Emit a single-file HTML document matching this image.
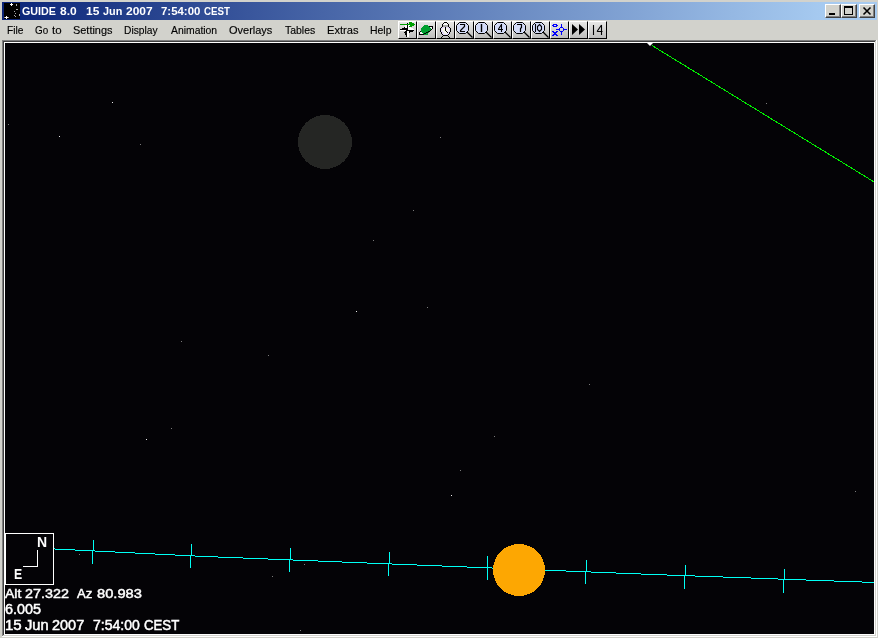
<!DOCTYPE html>
<html><head><meta charset="utf-8"><style>
html,body{margin:0;padding:0;}
body{width:878px;height:638px;overflow:hidden;position:relative;background:#D2D2CC;font-family:"Liberation Sans",sans-serif;}
.t{position:absolute;white-space:pre;line-height:1;filter:grayscale(1);}
svg{position:absolute;left:0;top:0;}
</style></head><body>

<div style="position:absolute;left:2px;top:2px;width:875px;height:18px;background:linear-gradient(to right,#0A2478 0px,#A6CAF0 820px);"></div>
<svg style="left:4px;top:3px" width="16" height="16" viewBox="0 0 16 16" shape-rendering="crispEdges"><rect width="16" height="16" fill="#000"/><rect x="7" y="0" width="1" height="1" fill="#fff"/><rect x="6" y="1" width="1" height="1" fill="#fff"/><rect x="7" y="1" width="1" height="1" fill="#fff"/><rect x="8" y="1" width="1" height="1" fill="#fff"/><rect x="7" y="2" width="1" height="1" fill="#fff"/><rect x="2" y="13" width="1" height="1" fill="#fff"/><rect x="1" y="14" width="1" height="1" fill="#fff"/><rect x="2" y="14" width="1" height="1" fill="#fff"/><rect x="3" y="14" width="1" height="1" fill="#fff"/><rect x="2" y="15" width="1" height="1" fill="#fff"/><rect x="0" y="14" width="1" height="1" fill="#888"/><rect x="4" y="14" width="1" height="1" fill="#888"/><rect x="12" y="1" width="1" height="1" fill="#aaa"/><rect x="12" y="2" width="1" height="1" fill="#aaa"/><rect x="12" y="6" width="1" height="1" fill="#aaa"/><rect x="13" y="6" width="1" height="1" fill="#aaa"/><rect x="10" y="8" width="1" height="1" fill="#aaa"/><rect x="11" y="10" width="1" height="1" fill="#aaa"/><rect x="15" y="11" width="1" height="1" fill="#aaa"/><rect x="15" y="12" width="1" height="1" fill="#aaa"/><rect x="10" y="12" width="1" height="1" fill="#aaa"/><rect x="11" y="13" width="1" height="1" fill="#aaa"/></svg>
<div class="t" style="left:22.0px;top:6.11px;font-size:12px;font-weight:bold;color:#fff;transform:scale(0.895,0.889);transform-origin:0 0;">GUIDE</div>
<div class="t" style="left:60.0px;top:6.11px;font-size:12px;font-weight:bold;color:#fff;transform:scale(1.0,0.889);transform-origin:0 0;">8.0</div>
<div class="t" style="left:86.0px;top:6.11px;font-size:12px;font-weight:bold;color:#fff;transform:scale(1.0,0.889);transform-origin:0 0;">15</div>
<div class="t" style="left:103.0px;top:6.11px;font-size:12px;font-weight:bold;color:#fff;transform:scale(0.905,0.889);transform-origin:0 0;">Jun</div>
<div class="t" style="left:126.0px;top:6.11px;font-size:12px;font-weight:bold;color:#fff;transform:scale(1.0,0.889);transform-origin:0 0;">2007</div>
<div class="t" style="left:161.0px;top:6.11px;font-size:12px;font-weight:bold;color:#fff;transform:scale(0.951,0.889);transform-origin:0 0;">7:54:00</div>
<div class="t" style="left:204.0px;top:6.11px;font-size:12px;font-weight:bold;color:#fff;transform:scale(0.812,0.889);transform-origin:0 0;">CEST</div>
<div class="t" style="left:7.12px;top:25.0px;font-size:11.5px;font-weight:normal;color:#000;transform:scale(0.882,1.0);transform-origin:0 0;-webkit-text-stroke:0.15px #000">File</div>
<div class="t" style="left:35.14px;top:25.0px;font-size:11.5px;font-weight:normal;color:#000;transform:scale(0.857,1.0);transform-origin:0 0;-webkit-text-stroke:0.15px #000">Go</div>
<div class="t" style="left:52.0px;top:25.0px;font-size:11.5px;font-weight:normal;color:#000;transform:scale(1.0,1.0);transform-origin:0 0;-webkit-text-stroke:0.15px #000">to</div>
<div class="t" style="left:73.05px;top:25.0px;font-size:11.5px;font-weight:normal;color:#000;transform:scale(0.95,1.0);transform-origin:0 0;-webkit-text-stroke:0.15px #000">Settings</div>
<div class="t" style="left:124.11px;top:25.0px;font-size:11.5px;font-weight:normal;color:#000;transform:scale(0.892,1.0);transform-origin:0 0;-webkit-text-stroke:0.15px #000">Display</div>
<div class="t" style="left:171.0px;top:25.0px;font-size:11.5px;font-weight:normal;color:#000;transform:scale(0.902,1.0);transform-origin:0 0;-webkit-text-stroke:0.15px #000">Animation</div>
<div class="t" style="left:229.05px;top:25.0px;font-size:11.5px;font-weight:normal;color:#000;transform:scale(0.955,1.0);transform-origin:0 0;-webkit-text-stroke:0.15px #000">Overlays</div>
<div class="t" style="left:285.0px;top:25.0px;font-size:11.5px;font-weight:normal;color:#000;transform:scale(0.909,1.0);transform-origin:0 0;-webkit-text-stroke:0.15px #000">Tables</div>
<div class="t" style="left:327.03px;top:25.0px;font-size:11.5px;font-weight:normal;color:#000;transform:scale(0.968,1.0);transform-origin:0 0;-webkit-text-stroke:0.15px #000">Extras</div>
<div class="t" style="left:370.09px;top:25.0px;font-size:11.5px;font-weight:normal;color:#000;transform:scale(0.909,1.0);transform-origin:0 0;-webkit-text-stroke:0.15px #000">Help</div>
<div style="position:absolute;left:825px;top:4px;width:16px;height:14px;background:#D2D2CC;box-sizing:border-box;border-top:1px solid #fff;border-left:1px solid #fff;border-right:1px solid #404040;border-bottom:1px solid #404040;"></div>
<div style="position:absolute;left:826px;top:16px;width:14px;height:1px;background:#808080;"></div>
<div style="position:absolute;left:839px;top:5px;width:1px;height:12px;background:#808080;"></div>
<div style="position:absolute;left:841px;top:4px;width:16px;height:14px;background:#D2D2CC;box-sizing:border-box;border-top:1px solid #fff;border-left:1px solid #fff;border-right:1px solid #404040;border-bottom:1px solid #404040;"></div>
<div style="position:absolute;left:842px;top:16px;width:14px;height:1px;background:#808080;"></div>
<div style="position:absolute;left:855px;top:5px;width:1px;height:12px;background:#808080;"></div>
<div style="position:absolute;left:859px;top:4px;width:16px;height:14px;background:#D2D2CC;box-sizing:border-box;border-top:1px solid #fff;border-left:1px solid #fff;border-right:1px solid #404040;border-bottom:1px solid #404040;"></div>
<div style="position:absolute;left:860px;top:16px;width:14px;height:1px;background:#808080;"></div>
<div style="position:absolute;left:873px;top:5px;width:1px;height:12px;background:#808080;"></div>
<div style="position:absolute;left:829px;top:13px;width:6px;height:2px;background:#000;"></div>
<div style="position:absolute;left:844px;top:6px;width:9px;height:9px;box-sizing:border-box;border:1px solid #000;border-top-width:2px"></div>
<svg style="left:859px;top:4px" width="16" height="14" viewBox="0 0 16 14"><path d="M4.5 3.5 L11.5 10.5 M11.5 3.5 L4.5 10.5" stroke="#000" stroke-width="1.6"/></svg>
<div style="position:absolute;left:398px;top:21px;width:19px;height:18px;background:linear-gradient(#e8e8e6,#bdbdbb);box-sizing:border-box;border-top:1px solid #fff;border-left:1px solid #fff;border-right:1px solid #000;border-bottom:1px solid #000;"></div>
<svg style="left:398px;top:21px" width="19" height="18" viewBox="0 0 19 18"><g shape-rendering="crispEdges"><rect x="7" y="4" width="2" height="1" fill="#fff"/><rect x="7" y="5" width="2" height="1" fill="#fff"/><rect x="7" y="6" width="2" height="1" fill="#fff"/><rect x="10" y="4" width="2" height="1" fill="#fff"/><rect x="10" y="5" width="2" height="1" fill="#fff"/><rect x="10" y="6" width="3" height="1" fill="#fff"/><rect x="10" y="7" width="5" height="1" fill="#fff"/><rect x="10" y="8" width="6" height="1" fill="#fff"/><rect x="2" y="9" width="6" height="1" fill="#fff"/><rect x="9" y="10" width="2" height="1" fill="#fff"/><rect x="9" y="11" width="2" height="1" fill="#fff"/><rect x="9" y="12" width="2" height="1" fill="#fff"/><rect x="9" y="13" width="2" height="1" fill="#fff"/><rect x="9" y="14" width="2" height="1" fill="#fff"/><rect x="9" y="15" width="2" height="1" fill="#fff"/><rect x="9" y="2" width="1" height="1" fill="#000"/><rect x="9" y="3" width="1" height="1" fill="#000"/><rect x="9" y="4" width="1" height="1" fill="#000"/><rect x="9" y="5" width="1" height="1" fill="#000"/><rect x="9" y="6" width="1" height="1" fill="#000"/><rect x="9" y="7" width="1" height="1" fill="#000"/><rect x="6" y="6" width="1" height="1" fill="#000"/><rect x="4" y="7" width="5" height="1" fill="#000"/><rect x="2" y="8" width="8" height="1" fill="#000"/><rect x="8" y="9" width="8" height="1" fill="#000"/><rect x="7" y="10" width="2" height="1" fill="#000"/><rect x="11" y="10" width="4" height="1" fill="#000"/><rect x="11" y="11" width="1" height="1" fill="#000"/><rect x="6" y="11" width="3" height="1" fill="#000"/><rect x="7" y="12" width="2" height="1" fill="#000"/><rect x="7" y="13" width="2" height="1" fill="#000"/><rect x="8" y="14" width="1" height="1" fill="#000"/><rect x="8" y="15" width="1" height="1" fill="#000"/><rect x="2" y="3" width="10" height="1" fill="#00A000"/><rect x="11" y="1" width="3" height="1" fill="#00A000"/><rect x="11" y="2" width="5" height="1" fill="#00A000"/><rect x="11" y="3" width="6" height="1" fill="#00A000"/><rect x="12" y="4" width="4" height="1" fill="#00A000"/><rect x="11" y="5" width="3" height="1" fill="#00A000"/></g></svg>
<div style="position:absolute;left:417px;top:21px;width:19px;height:18px;background:linear-gradient(#e8e8e6,#bdbdbb);box-sizing:border-box;border-top:1px solid #fff;border-left:1px solid #fff;border-right:1px solid #000;border-bottom:1px solid #000;"></div>
<svg style="left:417px;top:21px" width="19" height="18" viewBox="0 0 19 18"><g shape-rendering="crispEdges"><rect x="7" y="4" width="4" height="1" fill="#00A030"/><rect x="6" y="5" width="6" height="1" fill="#00A030"/><rect x="5" y="6" width="8" height="1" fill="#00A030"/><rect x="4" y="7" width="10" height="1" fill="#00A030"/><rect x="4" y="8" width="10" height="1" fill="#00A030"/><rect x="4" y="9" width="10" height="1" fill="#00A030"/><rect x="4" y="10" width="9" height="1" fill="#00A030"/><rect x="5" y="11" width="7" height="1" fill="#00A030"/><rect x="6" y="12" width="5" height="1" fill="#00A030"/><rect x="7" y="13" width="4" height="1" fill="#00A030"/><rect x="3" y="11" width="2" height="1" fill="#f4f4f4"/><rect x="3" y="12" width="3" height="1" fill="#f4f4f4"/><rect x="13" y="6" width="2" height="1" fill="#f4f4f4"/><rect x="14" y="7" width="1" height="1" fill="#f4f4f4"/><rect x="12" y="5" width="4" height="1" fill="#000"/><rect x="15" y="6" width="1" height="1" fill="#000"/><rect x="15" y="7" width="1" height="1" fill="#000"/><rect x="14" y="8" width="1" height="1" fill="#000"/><rect x="13" y="9" width="1" height="1" fill="#000"/><rect x="11" y="10" width="2" height="1" fill="#000"/><rect x="9" y="11" width="2" height="1" fill="#000"/><rect x="7" y="12" width="2" height="1" fill="#000"/><rect x="2" y="13" width="5" height="1" fill="#000"/><rect x="3" y="10" width="1" height="1" fill="#000"/><rect x="2" y="11" width="1" height="1" fill="#000"/><rect x="2" y="12" width="1" height="1" fill="#000"/></g></svg>
<div style="position:absolute;left:436px;top:21px;width:19px;height:18px;background:linear-gradient(#e8e8e6,#bdbdbb);box-sizing:border-box;border-top:1px solid #fff;border-left:1px solid #fff;border-right:1px solid #000;border-bottom:1px solid #000;"></div>
<svg style="left:436px;top:21px" width="19" height="18" viewBox="0 0 19 18"><g shape-rendering="crispEdges"><rect x="8" y="2" width="3" height="1" fill="#f8f8f8"/><rect x="7" y="3" width="5" height="1" fill="#f8f8f8"/><rect x="7" y="4" width="5" height="1" fill="#a8a8a8"/><rect x="7" y="5" width="5" height="1" fill="#a8a8a8"/><rect x="6" y="6" width="7" height="1" fill="#E4DAF8"/><rect x="5" y="7" width="9" height="1" fill="#E4DAF8"/><rect x="5" y="8" width="9" height="1" fill="#E4DAF8"/><rect x="5" y="9" width="9" height="1" fill="#E4DAF8"/><rect x="5" y="10" width="9" height="1" fill="#E4DAF8"/><rect x="6" y="11" width="7" height="1" fill="#E4DAF8"/><rect x="6" y="12" width="7" height="1" fill="#E4DAF8"/><rect x="7" y="13" width="5" height="1" fill="#E4DAF8"/><rect x="7" y="7" width="5" height="1" fill="#F6F6EC"/><rect x="6" y="8" width="7" height="1" fill="#F6F6EC"/><rect x="6" y="9" width="7" height="1" fill="#F6F6EC"/><rect x="7" y="10" width="5" height="1" fill="#F6F6EC"/><rect x="8" y="11" width="4" height="1" fill="#F6F6EC"/><rect x="8" y="12" width="3" height="1" fill="#F6F6EC"/><rect x="8" y="1" width="3" height="1" fill="#000"/><rect x="7" y="2" width="1" height="1" fill="#000"/><rect x="11" y="2" width="1" height="1" fill="#000"/><rect x="6" y="3" width="1" height="1" fill="#000"/><rect x="12" y="3" width="1" height="1" fill="#000"/><rect x="6" y="4" width="1" height="1" fill="#000"/><rect x="12" y="4" width="1" height="1" fill="#000"/><rect x="6" y="5" width="1" height="1" fill="#000"/><rect x="12" y="5" width="1" height="1" fill="#000"/><rect x="5" y="6" width="1" height="1" fill="#000"/><rect x="13" y="6" width="1" height="1" fill="#000"/><rect x="4" y="7" width="1" height="1" fill="#000"/><rect x="14" y="7" width="1" height="1" fill="#000"/><rect x="4" y="8" width="1" height="1" fill="#000"/><rect x="14" y="8" width="1" height="1" fill="#000"/><rect x="4" y="9" width="1" height="1" fill="#000"/><rect x="14" y="9" width="1" height="1" fill="#000"/><rect x="4" y="10" width="1" height="1" fill="#000"/><rect x="14" y="10" width="1" height="1" fill="#000"/><rect x="5" y="11" width="1" height="1" fill="#000"/><rect x="13" y="11" width="1" height="1" fill="#000"/><rect x="5" y="12" width="1" height="1" fill="#000"/><rect x="13" y="12" width="1" height="1" fill="#000"/><rect x="6" y="13" width="1" height="1" fill="#000"/><rect x="12" y="13" width="1" height="1" fill="#000"/><rect x="7" y="14" width="5" height="1" fill="#000"/><rect x="6" y="15" width="1" height="1" fill="#000"/><rect x="12" y="15" width="1" height="1" fill="#000"/><rect x="5" y="16" width="1" height="1" fill="#000"/><rect x="13" y="16" width="1" height="1" fill="#000"/><rect x="9" y="6" width="1" height="1" fill="#000"/><rect x="9" y="7" width="1" height="1" fill="#000"/><rect x="9" y="8" width="1" height="1" fill="#000"/><rect x="9" y="9" width="1" height="1" fill="#000"/><rect x="10" y="10" width="1" height="1" fill="#000"/><rect x="11" y="11" width="1" height="1" fill="#000"/></g></svg>
<div style="position:absolute;left:455px;top:21px;width:19px;height:18px;background:linear-gradient(#e8e8e6,#bdbdbb);box-sizing:border-box;border-top:1px solid #fff;border-left:1px solid #fff;border-right:1px solid #000;border-bottom:1px solid #000;"></div>
<svg style="left:455px;top:21px" width="19" height="18" viewBox="0 0 19 18"><path d="M4.5 1.5 H10.5 L13.5 4.5 V9.5 L10.5 12.5 H4.5 L1.5 9.5 V4.5 Z" fill="#D4DCF8" stroke="#000" stroke-width="1"/><path d="M12 11 L17.5 16.5" stroke="#000" stroke-width="1.2"/><path d="M5 3.5 H9.5 V5.5 L5.5 9.5 V10.5 H10" fill="none" stroke="#000" stroke-width="1.2"/></svg>
<div style="position:absolute;left:474px;top:21px;width:19px;height:18px;background:linear-gradient(#e8e8e6,#bdbdbb);box-sizing:border-box;border-top:1px solid #fff;border-left:1px solid #fff;border-right:1px solid #000;border-bottom:1px solid #000;"></div>
<svg style="left:474px;top:21px" width="19" height="18" viewBox="0 0 19 18"><path d="M4.5 1.5 H10.5 L13.5 4.5 V9.5 L10.5 12.5 H4.5 L1.5 9.5 V4.5 Z" fill="#D4DCF8" stroke="#000" stroke-width="1"/><path d="M12 11 L17.5 16.5" stroke="#000" stroke-width="1.2"/><path d="M7.5 3 V11" stroke="#000" stroke-width="1.4"/></svg>
<div style="position:absolute;left:493px;top:21px;width:19px;height:18px;background:linear-gradient(#e8e8e6,#bdbdbb);box-sizing:border-box;border-top:1px solid #fff;border-left:1px solid #fff;border-right:1px solid #000;border-bottom:1px solid #000;"></div>
<svg style="left:493px;top:21px" width="19" height="18" viewBox="0 0 19 18"><path d="M4.5 1.5 H10.5 L13.5 4.5 V9.5 L10.5 12.5 H4.5 L1.5 9.5 V4.5 Z" fill="#D4DCF8" stroke="#000" stroke-width="1"/><path d="M12 11 L17.5 16.5" stroke="#000" stroke-width="1.2"/><path d="M8.5 3 V11 M5 8.5 H10 M8.5 3.5 L5.5 8" fill="none" stroke="#000" stroke-width="1.1"/></svg>
<div style="position:absolute;left:512px;top:21px;width:19px;height:18px;background:linear-gradient(#e8e8e6,#bdbdbb);box-sizing:border-box;border-top:1px solid #fff;border-left:1px solid #fff;border-right:1px solid #000;border-bottom:1px solid #000;"></div>
<svg style="left:512px;top:21px" width="19" height="18" viewBox="0 0 19 18"><path d="M4.5 1.5 H10.5 L13.5 4.5 V9.5 L10.5 12.5 H4.5 L1.5 9.5 V4.5 Z" fill="#D4DCF8" stroke="#000" stroke-width="1"/><path d="M12 11 L17.5 16.5" stroke="#000" stroke-width="1.2"/><path d="M5 3.5 H9.5 V6.5 L8.5 7.5 V11" fill="none" stroke="#000" stroke-width="1.2"/></svg>
<div style="position:absolute;left:531px;top:21px;width:19px;height:18px;background:linear-gradient(#e8e8e6,#bdbdbb);box-sizing:border-box;border-top:1px solid #fff;border-left:1px solid #fff;border-right:1px solid #000;border-bottom:1px solid #000;"></div>
<svg style="left:531px;top:21px" width="19" height="18" viewBox="0 0 19 18"><path d="M4.5 1.5 H10.5 L13.5 4.5 V9.5 L10.5 12.5 H4.5 L1.5 9.5 V4.5 Z" fill="#D4DCF8" stroke="#000" stroke-width="1"/><path d="M12 11 L17.5 16.5" stroke="#000" stroke-width="1.2"/><path d="M4.5 3 V11" stroke="#000" stroke-width="1.1"/><path d="M8.5 3.5 L10.5 5.5 V8.5 L8.5 10.5 L6.5 8.5 V5.5 Z" fill="none" stroke="#000" stroke-width="1.1"/></svg>
<div style="position:absolute;left:550px;top:21px;width:19px;height:18px;background:linear-gradient(#e8e8e6,#bdbdbb);box-sizing:border-box;border-top:1px solid #fff;border-left:1px solid #fff;border-right:1px solid #000;border-bottom:1px solid #000;"></div>
<svg style="left:550px;top:21px" width="19" height="18" viewBox="0 0 19 18"><g shape-rendering="crispEdges"><rect x="3" y="3" width="4" height="1" fill="#0000FF"/><rect x="2" y="4" width="2" height="1" fill="#0000FF"/><rect x="6" y="4" width="2" height="1" fill="#0000FF"/><rect x="3" y="5" width="4" height="1" fill="#0000FF"/><rect x="2" y="10" width="2" height="1" fill="#0000FF"/><rect x="6" y="10" width="2" height="1" fill="#0000FF"/><rect x="3" y="11" width="4" height="1" fill="#0000FF"/><rect x="4" y="12" width="2" height="1" fill="#0000FF"/><rect x="3" y="13" width="4" height="1" fill="#0000FF"/><rect x="2" y="14" width="2" height="1" fill="#0000FF"/><rect x="6" y="14" width="2" height="1" fill="#0000FF"/><rect x="11" y="3" width="1" height="1" fill="#0000FF"/><rect x="11" y="4" width="1" height="1" fill="#0000FF"/><rect x="11" y="5" width="1" height="1" fill="#0000FF"/><rect x="10" y="6" width="3" height="1" fill="#0000FF"/><rect x="9" y="7" width="1" height="1" fill="#0000FF"/><rect x="13" y="7" width="1" height="1" fill="#0000FF"/><rect x="6" y="8" width="4" height="1" fill="#0000FF"/><rect x="13" y="8" width="4" height="1" fill="#0000FF"/><rect x="9" y="9" width="1" height="1" fill="#0000FF"/><rect x="13" y="9" width="1" height="1" fill="#0000FF"/><rect x="10" y="10" width="3" height="1" fill="#0000FF"/><rect x="11" y="11" width="1" height="1" fill="#0000FF"/><rect x="11" y="12" width="1" height="1" fill="#0000FF"/><rect x="11" y="13" width="1" height="1" fill="#0000FF"/></g></svg>
<div style="position:absolute;left:569px;top:21px;width:19px;height:18px;background:linear-gradient(#e8e8e6,#bdbdbb);box-sizing:border-box;border-top:1px solid #fff;border-left:1px solid #fff;border-right:1px solid #000;border-bottom:1px solid #000;"></div>
<svg style="left:569px;top:21px" width="19" height="18" viewBox="0 0 19 18"><path d="M3 3 L9 8.5 L3 14 Z M10 3 L16 8.5 L10 14 Z" fill="#000"/></svg>
<div style="position:absolute;left:588px;top:21px;width:19px;height:18px;background:linear-gradient(#e8e8e6,#bdbdbb);box-sizing:border-box;border-top:1px solid #fff;border-left:1px solid #fff;border-right:1px solid #000;border-bottom:1px solid #000;"></div>
<svg style="left:588px;top:21px" width="19" height="18" viewBox="0 0 19 18"><path d="M5.5 4 V14" stroke="#000" stroke-width="1.1"/><path d="M13.5 4 V14 M9 10.5 H14.5 M13.5 4 L9 10.5" fill="none" stroke="#000" stroke-width="1.1"/></svg>
<div style="position:absolute;left:2px;top:40px;width:874px;height:1px;background:#808080;"></div>
<div style="position:absolute;left:2px;top:40px;width:1px;height:596px;background:#808080;"></div>
<div style="position:absolute;left:3px;top:41px;width:872px;height:1px;background:#404040;"></div>
<div style="position:absolute;left:3px;top:41px;width:1px;height:594px;background:#404040;"></div>
<div style="position:absolute;left:876px;top:40px;width:1px;height:597px;background:#fff;"></div>
<div style="position:absolute;left:2px;top:636px;width:875px;height:1px;background:#fff;"></div>
<div style="position:absolute;left:4px;top:42px;width:871px;height:593px;background:#fff;"></div>
<div style="position:absolute;left:5px;top:43px;width:869px;height:591px;background:#040306;"></div>
<div style="position:absolute;left:112px;top:102px;width:1px;height:1px;background:#e8e8e8;"></div>
<div style="position:absolute;left:59px;top:136px;width:1px;height:1px;background:#e8e8e8;"></div>
<div style="position:absolute;left:356px;top:311px;width:1px;height:1px;background:#e8e8e8;"></div>
<div style="position:absolute;left:146px;top:439px;width:1px;height:1px;background:#e8e8e8;"></div>
<div style="position:absolute;left:451px;top:495px;width:1px;height:1px;background:#e8e8e8;"></div>
<div style="position:absolute;left:8px;top:124px;width:1px;height:1px;background:#7a7a7a;"></div>
<div style="position:absolute;left:140px;top:144px;width:1px;height:1px;background:#7a7a7a;"></div>
<div style="position:absolute;left:440px;top:137px;width:1px;height:1px;background:#7a7a7a;"></div>
<div style="position:absolute;left:766px;top:103px;width:1px;height:1px;background:#7a7a7a;"></div>
<div style="position:absolute;left:181px;top:341px;width:1px;height:1px;background:#7a7a7a;"></div>
<div style="position:absolute;left:413px;top:210px;width:1px;height:1px;background:#7a7a7a;"></div>
<div style="position:absolute;left:373px;top:240px;width:1px;height:1px;background:#7a7a7a;"></div>
<div style="position:absolute;left:427px;top:307px;width:1px;height:1px;background:#7a7a7a;"></div>
<div style="position:absolute;left:171px;top:428px;width:1px;height:1px;background:#7a7a7a;"></div>
<div style="position:absolute;left:268px;top:355px;width:1px;height:1px;background:#7a7a7a;"></div>
<div style="position:absolute;left:589px;top:384px;width:1px;height:1px;background:#7a7a7a;"></div>
<div style="position:absolute;left:494px;top:436px;width:1px;height:1px;background:#7a7a7a;"></div>
<div style="position:absolute;left:460px;top:470px;width:1px;height:1px;background:#7a7a7a;"></div>
<div style="position:absolute;left:855px;top:491px;width:1px;height:1px;background:#7a7a7a;"></div>
<div style="position:absolute;left:272px;top:576px;width:1px;height:1px;background:#7a7a7a;"></div>
<div style="position:absolute;left:304px;top:564px;width:1px;height:1px;background:#7a7a7a;"></div>
<div style="position:absolute;left:300px;top:630px;width:1px;height:1px;background:#7a7a7a;"></div>
<div style="position:absolute;left:79px;top:554px;width:1px;height:1px;background:#7a7a7a;"></div>
<svg width="878" height="638"><circle cx="325" cy="142" r="27" fill="#252624" shape-rendering="crispEdges"/></svg>
<div style="position:absolute;left:54px;top:548px;width:1px;height:1px;background:#00FFF4;"></div>
<div style="position:absolute;left:55px;top:549px;width:20px;height:1px;background:#00FFF4;"></div>
<div style="position:absolute;left:75px;top:550px;width:20px;height:1px;background:#00FFF4;"></div>
<div style="position:absolute;left:95px;top:551px;width:20px;height:1px;background:#00FFF4;"></div>
<div style="position:absolute;left:115px;top:552px;width:20px;height:1px;background:#00FFF4;"></div>
<div style="position:absolute;left:135px;top:553px;width:20px;height:1px;background:#00FFF4;"></div>
<div style="position:absolute;left:155px;top:554px;width:20px;height:1px;background:#00FFF4;"></div>
<div style="position:absolute;left:175px;top:555px;width:20px;height:1px;background:#00FFF4;"></div>
<div style="position:absolute;left:195px;top:556px;width:23px;height:1px;background:#00FFF4;"></div>
<div style="position:absolute;left:218px;top:557px;width:25px;height:1px;background:#00FFF4;"></div>
<div style="position:absolute;left:243px;top:558px;width:25px;height:1px;background:#00FFF4;"></div>
<div style="position:absolute;left:268px;top:559px;width:25px;height:1px;background:#00FFF4;"></div>
<div style="position:absolute;left:293px;top:560px;width:25px;height:1px;background:#00FFF4;"></div>
<div style="position:absolute;left:318px;top:561px;width:24px;height:1px;background:#00FFF4;"></div>
<div style="position:absolute;left:342px;top:562px;width:25px;height:1px;background:#00FFF4;"></div>
<div style="position:absolute;left:367px;top:563px;width:25px;height:1px;background:#00FFF4;"></div>
<div style="position:absolute;left:392px;top:564px;width:25px;height:1px;background:#00FFF4;"></div>
<div style="position:absolute;left:417px;top:565px;width:25px;height:1px;background:#00FFF4;"></div>
<div style="position:absolute;left:442px;top:566px;width:25px;height:1px;background:#00FFF4;"></div>
<div style="position:absolute;left:467px;top:567px;width:25px;height:1px;background:#00FFF4;"></div>
<div style="position:absolute;left:492px;top:568px;width:25px;height:1px;background:#00FFF4;"></div>
<div style="position:absolute;left:517px;top:569px;width:25px;height:1px;background:#00FFF4;"></div>
<div style="position:absolute;left:542px;top:570px;width:24px;height:1px;background:#00FFF4;"></div>
<div style="position:absolute;left:566px;top:571px;width:25px;height:1px;background:#00FFF4;"></div>
<div style="position:absolute;left:591px;top:572px;width:25px;height:1px;background:#00FFF4;"></div>
<div style="position:absolute;left:616px;top:573px;width:25px;height:1px;background:#00FFF4;"></div>
<div style="position:absolute;left:641px;top:574px;width:26px;height:1px;background:#00FFF4;"></div>
<div style="position:absolute;left:667px;top:575px;width:28px;height:1px;background:#00FFF4;"></div>
<div style="position:absolute;left:695px;top:576px;width:28px;height:1px;background:#00FFF4;"></div>
<div style="position:absolute;left:723px;top:577px;width:28px;height:1px;background:#00FFF4;"></div>
<div style="position:absolute;left:751px;top:578px;width:27px;height:1px;background:#00FFF4;"></div>
<div style="position:absolute;left:778px;top:579px;width:28px;height:1px;background:#00FFF4;"></div>
<div style="position:absolute;left:806px;top:580px;width:28px;height:1px;background:#00FFF4;"></div>
<div style="position:absolute;left:834px;top:581px;width:28px;height:1px;background:#00FFF4;"></div>
<div style="position:absolute;left:862px;top:582px;width:12px;height:1px;background:#00FFF4;"></div>
<div style="position:absolute;left:93px;top:540px;width:1px;height:10px;background:#00FFF4;"></div>
<div style="position:absolute;left:92px;top:550px;width:1px;height:14px;background:#00FFF4;"></div>
<div style="position:absolute;left:191px;top:544px;width:1px;height:11px;background:#00FFF4;"></div>
<div style="position:absolute;left:190px;top:555px;width:1px;height:13px;background:#00FFF4;"></div>
<div style="position:absolute;left:290px;top:548px;width:1px;height:11px;background:#00FFF4;"></div>
<div style="position:absolute;left:289px;top:559px;width:1px;height:13px;background:#00FFF4;"></div>
<div style="position:absolute;left:389px;top:552px;width:1px;height:11px;background:#00FFF4;"></div>
<div style="position:absolute;left:388px;top:563px;width:1px;height:13px;background:#00FFF4;"></div>
<div style="position:absolute;left:487px;top:556px;width:1px;height:11px;background:#00FFF4;"></div>
<div style="position:absolute;left:487px;top:567px;width:1px;height:13px;background:#00FFF4;"></div>
<div style="position:absolute;left:586px;top:560px;width:1px;height:11px;background:#00FFF4;"></div>
<div style="position:absolute;left:585px;top:571px;width:1px;height:13px;background:#00FFF4;"></div>
<div style="position:absolute;left:685px;top:565px;width:1px;height:10px;background:#00FFF4;"></div>
<div style="position:absolute;left:684px;top:575px;width:1px;height:14px;background:#00FFF4;"></div>
<div style="position:absolute;left:784px;top:569px;width:1px;height:10px;background:#00FFF4;"></div>
<div style="position:absolute;left:783px;top:579px;width:1px;height:14px;background:#00FFF4;"></div>
<svg width="878" height="638"><circle cx="519" cy="570" r="26" fill="#FDA702" shape-rendering="crispEdges"/><defs><clipPath id="cv"><rect x="5" y="43" width="869" height="591"/></clipPath></defs><line clip-path="url(#cv)" x1="652" y1="45.5" x2="876" y2="183.1" stroke="#00F000" stroke-width="1" shape-rendering="crispEdges"/><path d="M647 43 H653 L650 46 Z" fill="#fff"/></svg>
<div style="position:absolute;left:5px;top:533px;width:49px;height:52px;box-sizing:border-box;border:1px solid #fff;background:#040306"></div>
<div style="position:absolute;left:37px;top:550px;width:1px;height:17px;background:#fff;"></div>
<div style="position:absolute;left:23px;top:566px;width:15px;height:1px;background:#fff;"></div>
<div class="t" style="left:5.0px;top:587.09px;font-size:14px;font-weight:normal;color:#fff;transform:scale(1.0,0.909);transform-origin:0 0;-webkit-text-stroke:0.5px #fff">Alt</div>
<div class="t" style="left:24.98px;top:587.09px;font-size:14px;font-weight:normal;color:#fff;transform:scale(1.024,0.909);transform-origin:0 0;-webkit-text-stroke:0.5px #fff">27.322</div>
<div class="t" style="left:77.0px;top:587.09px;font-size:14px;font-weight:normal;color:#fff;transform:scale(0.938,0.909);transform-origin:0 0;-webkit-text-stroke:0.5px #fff">Az</div>
<div class="t" style="left:96.95px;top:587.09px;font-size:14px;font-weight:normal;color:#fff;transform:scale(1.049,0.909);transform-origin:0 0;-webkit-text-stroke:0.5px #fff">80.983</div>
<div class="t" style="left:4.97px;top:602.0px;font-size:14px;font-weight:normal;color:#fff;transform:scale(1.029,1.0);transform-origin:0 0;-webkit-text-stroke:0.5px #fff">6.005</div>
<div class="t" style="left:4.93px;top:618.0px;font-size:14px;font-weight:normal;color:#fff;transform:scale(1.071,1.0);transform-origin:0 0;-webkit-text-stroke:0.5px #fff">15</div>
<div class="t" style="left:25.0px;top:618.0px;font-size:14px;font-weight:normal;color:#fff;transform:scale(1.045,1.0);transform-origin:0 0;-webkit-text-stroke:0.5px #fff">Jun</div>
<div class="t" style="left:51.97px;top:618.0px;font-size:14px;font-weight:normal;color:#fff;transform:scale(1.034,1.0);transform-origin:0 0;-webkit-text-stroke:0.5px #fff">2007</div>
<div class="t" style="left:93.0px;top:618.0px;font-size:14px;font-weight:normal;color:#fff;transform:scale(1.0,1.0);transform-origin:0 0;-webkit-text-stroke:0.5px #fff">7:54:00</div>
<div class="t" style="left:144.06px;top:618.0px;font-size:14px;font-weight:normal;color:#fff;transform:scale(0.944,1.0);transform-origin:0 0;-webkit-text-stroke:0.5px #fff">CEST</div>
<div class="t" style="left:37.0px;top:535.0px;font-size:14px;font-weight:bold;color:#fff;transform:scale(1.0,1.0);transform-origin:0 0;">N</div>
<div class="t" style="left:14.12px;top:567.0px;font-size:14px;font-weight:bold;color:#fff;transform:scale(0.875,1.0);transform-origin:0 0;">E</div>
</body></html>
